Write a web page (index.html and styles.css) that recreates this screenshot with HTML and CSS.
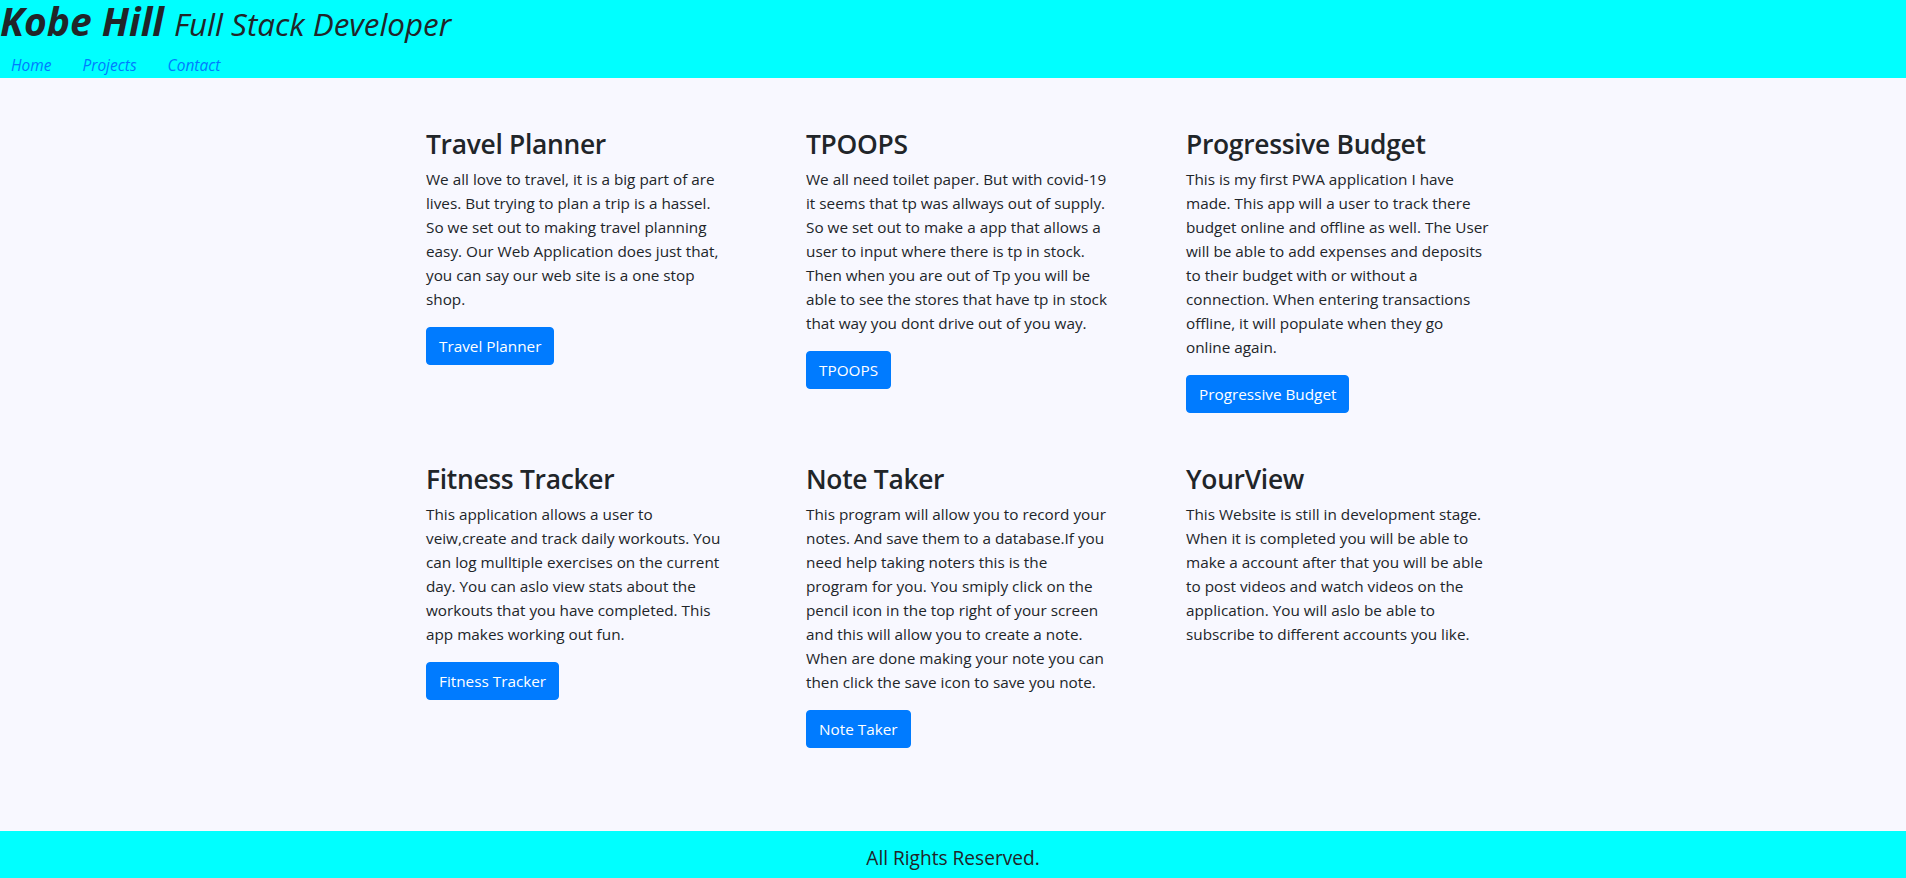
FILE: index.html
```html
<!DOCTYPE html>
<html lang="en">
<head>
<meta charset="utf-8">
<title>Kobe Hill | Projects</title>
<link rel="stylesheet" href="styles.css">
</head>
<body>
<header class="site-header">
  <h1 class="brand"><span class="brand-name">Kobe Hill</span> <span class="brand-role">Full Stack Developer</span></h1>
  <nav class="nav">
    <a class="nav-link" href="#">Home</a>
    <a class="nav-link" href="#">Projects</a>
    <a class="nav-link" href="#">Contact</a>
  </nav>
</header>
<main class="projects">
  <div class="grid">
    <article class="card">
      <h2 class="card-title">Travel Planner</h2>
      <p class="card-text">We all love to travel, it is a big part of are lives. But trying to plan a trip is a hassel. So we set out to making travel planning easy. Our Web Application does just that, you can say our web site is a one stop shop.</p>
      <a class="btn" href="#">Travel Planner</a>
    </article>
    <article class="card">
      <h2 class="card-title">TPOOPS</h2>
      <p class="card-text">We all need toilet paper. But with covid-19 it seems that tp was allways out of supply. So we set out to make a app that allows a user to input where there is tp in stock. Then when you are out of Tp you will be able to see the stores that have tp in stock that way you dont drive out of you way.</p>
      <a class="btn" href="#">TPOOPS</a>
    </article>
    <article class="card">
      <h2 class="card-title">Progressive Budget</h2>
      <p class="card-text">This is my first PWA application I have made. This app will a user to track there budget online and offline as well. The User will be able to add expenses and deposits to their budget with or without a connection. When entering transactions offline, it will populate when they go online again.</p>
      <a class="btn" href="#">Progressive Budget</a>
    </article>
    <article class="card">
      <h2 class="card-title">Fitness Tracker</h2>
      <p class="card-text">This application allows a user to veiw,create and track daily workouts. You can log mulltiple exercises on the current day. You can aslo view stats about the workouts that you have completed. This app makes working out fun.</p>
      <a class="btn" href="#">Fitness Tracker</a>
    </article>
    <article class="card">
      <h2 class="card-title">Note Taker</h2>
      <p class="card-text">This program will allow you to record your notes. And save them to a database.If you need help taking noters this is the program for you. You smiply click on the pencil icon in the top right of your screen and this will allow you to create a note. When are done making your note you can then click the save icon to save you note.</p>
      <a class="btn" href="#">Note Taker</a>
    </article>
    <article class="card">
      <h2 class="card-title">YourView</h2>
      <p class="card-text">This Website is still in development stage. When it is completed you will be able to make a account after that you will be able to post videos and watch videos on the application. You will aslo be able to subscribe to different accounts you like.</p>
    </article>
  </div>
</main>
<footer class="site-footer">All Rights Reserved.</footer>
</body>
</html>
```
FILE: styles.css
```css
* { box-sizing: border-box; }
html, body { margin: 0; padding: 0; }
body {
  font-family: "Open Sans", "Noto Sans", sans-serif;
  font-size: 15.3px;
  line-height: 24px;
  color: #212529;
  background: #f8f8ff;
}
.site-header {
  background: #00ffff;
  height: 78px;
}
.brand {
  margin: 0;
  font-size: 39px;
  line-height: 42px;
  font-style: italic;
  color: #212529;
  white-space: nowrap;
}
.brand-name { font-weight: 700; }
.brand-role { font-weight: 400; font-size: 31.4px; }
.nav {
  display: flex;
  gap: 31px;
  padding: 8px 0 0 11px;
}
.nav-link {
  font-size: 15.5px;
  line-height: 24px;
  font-style: italic;
  color: #007bff;
  text-decoration: none;
}
.projects {
  padding: 49px 0 83px;
}
.grid {
  width: 1140px;
  margin: 0 auto;
  display: grid;
  grid-template-columns: repeat(3, 380px);
  row-gap: 49px;
}
.card {
  padding: 0 32px 0 43px;
}
.card-title {
  margin: 0 0 6px;
  font-size: 26.4px;
  line-height: 34px;
  font-weight: 600;
  letter-spacing: -0.3px;
}
.card-text {
  margin: 0 0 16px;
}
.btn {
  display: inline-block;
  padding: 6px 12px;
  border: 1px solid #007bff;
  border-radius: 4px;
  background: #007bff;
  color: #fff;
  text-decoration: none;
  font-size: 15.3px;
  line-height: 24px;
}
.site-footer {
  background: #00ffff;
  text-align: center;
  font-size: 19.1px;
  line-height: 30px;
  padding: 12px 0 5px;
}
```
